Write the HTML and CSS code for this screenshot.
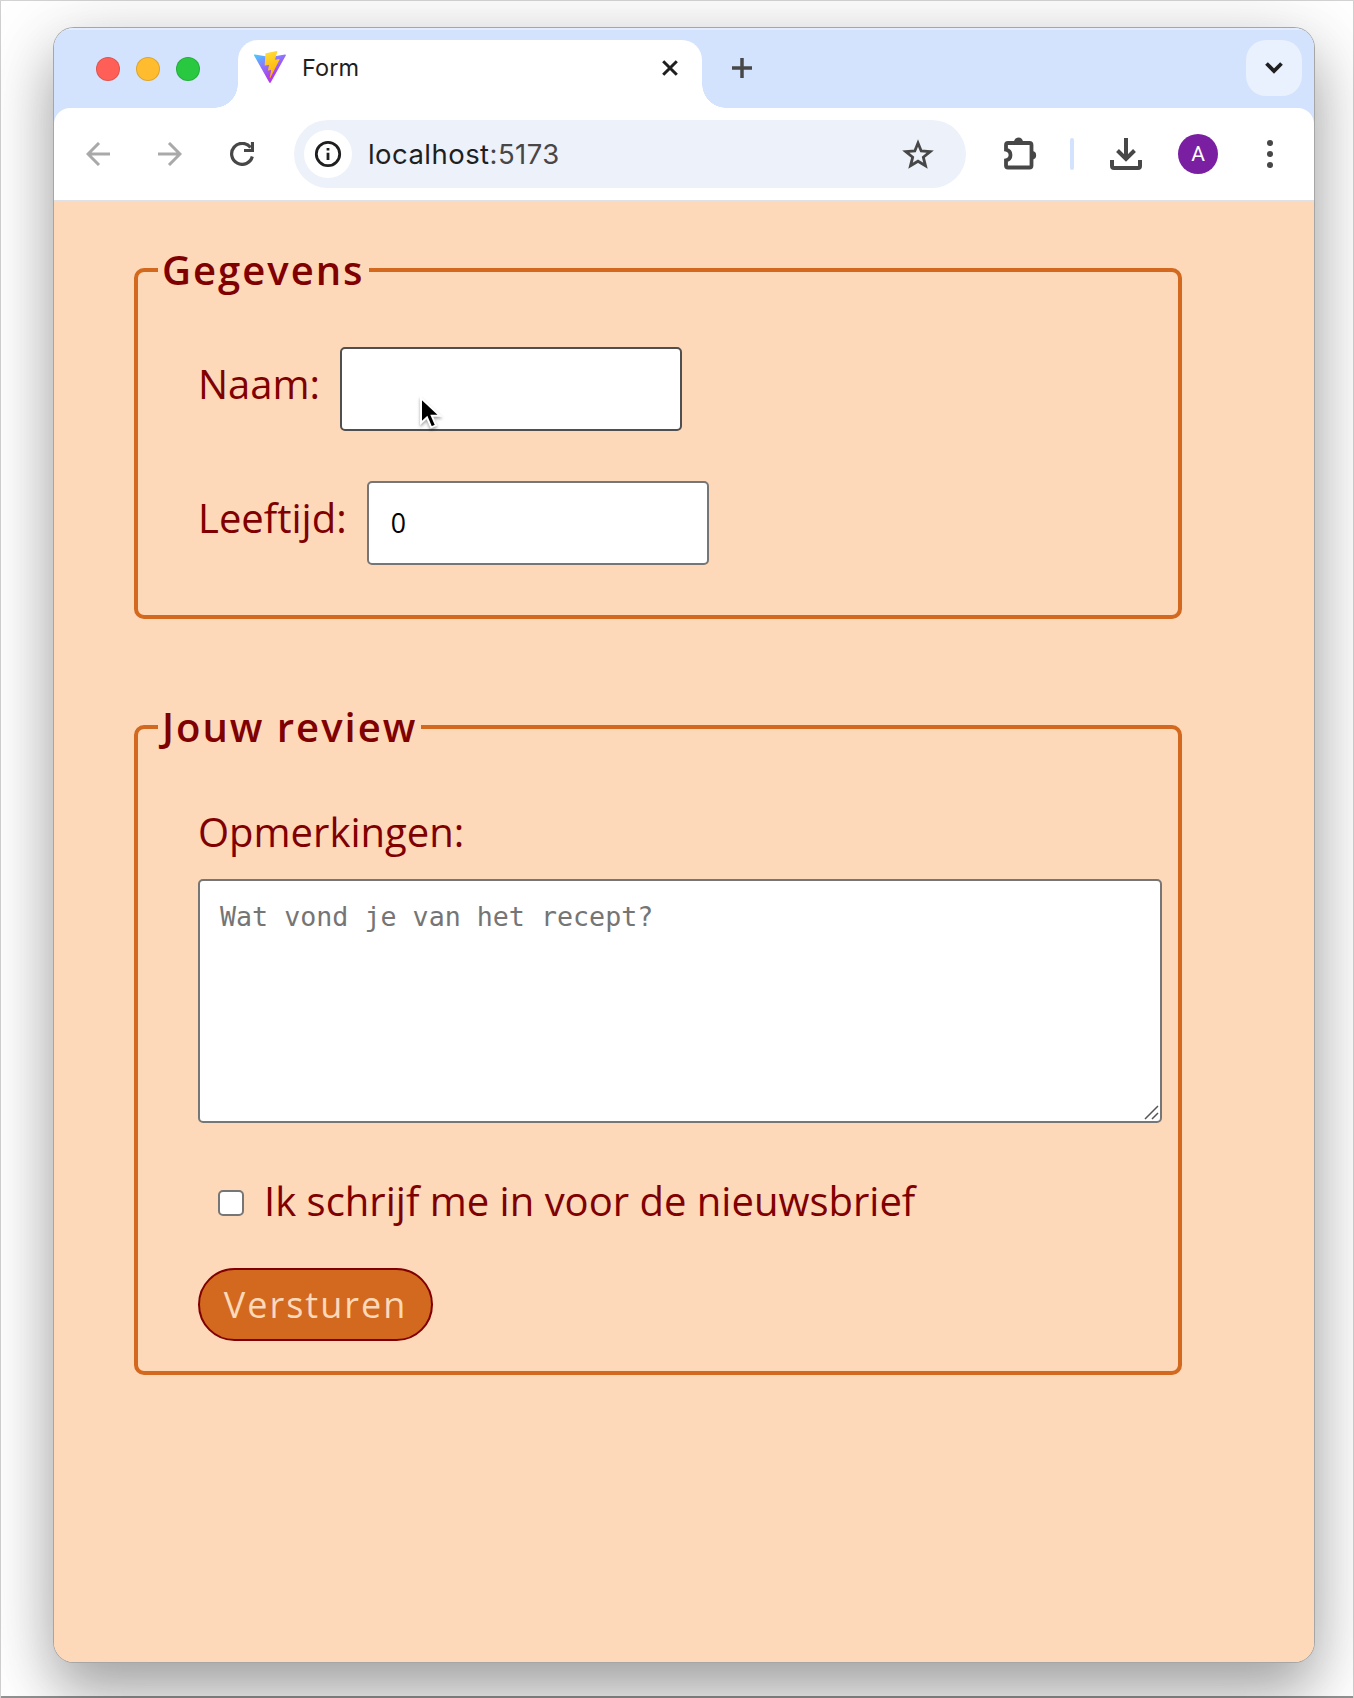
FILE: index.html
```html
<!DOCTYPE html>
<html lang="nl">
<head>
<meta charset="utf-8">
<title>Form</title>
<link rel="stylesheet" href="styles.css">
</head>
<body>
<div class="window">
  <header class="tabstrip">
    <div class="lights"><span class="light red"></span><span class="light yellow"></span><span class="light green"></span></div>
    <div class="tab">
      <svg class="favicon" width="32" height="33" viewBox="0 0 32 33">
        <defs>
          <linearGradient id="va" x1="0" y1="0" x2=".6" y2="1"><stop offset="0" stop-color="#41d1ff"/><stop offset=".4" stop-color="#8a7bff"/><stop offset=".8" stop-color="#b03be8"/></linearGradient>
          <linearGradient id="vb" x1=".4" y1="0" x2=".6" y2="1"><stop offset="0" stop-color="#ffdd35"/><stop offset="1" stop-color="#ffa800"/></linearGradient>
        </defs>
        <path fill="url(#va)" d="M31.8 4.6 16.7 31.5a.8.8 0 0 1-1.4 0L.1 4.6a.8.8 0 0 1 .9-1.2L16 6.1l15-2.7a.8.8 0 0 1 .8 1.2z"/>
        <path fill="url(#vb)" d="M22.7.1 11.8 2.2a.5.5 0 0 0-.4.4l-.7 11.5a.5.5 0 0 0 .6.5l3-.7a.5.5 0 0 1 .6.6l-.9 4.4a.5.5 0 0 0 .6.6l1.9-.6a.5.5 0 0 1 .6.6l-1.4 6.9c-.1.4.5.7.7.3L25.500 8.800a.5.5 0 0 0-.5-.7l-3.200.6a.5.5 0 0 1-.6-.6l2.100-7.400a.5.5 0 0 0-.6-.6z"/>
      </svg>
      <span class="tab-title">Form</span>
      <svg class="close" width="16" height="16" viewBox="0 0 16 16"><path d="M1.200 1.200 14.800 14.800M14.800 1.200 1.200 14.800"/></svg>
    </div>
    <svg class="plus" width="20" height="20" viewBox="0 0 20 20"><path d="M10 0v20M0 10h20"/></svg>
    <div class="tabsearch"><svg width="18" height="12" viewBox="0 0 18 12"><path d="M1.500 1.500 9 9l7.500-7.500"/></svg></div>
  </header>
  <nav class="toolbar">
    <svg class="dim" width="24" height="24" viewBox="0 0 24 24"><path d="M24 12H2M13 1 2 12l11 11"/></svg>
    <svg class="dim" width="24" height="24" viewBox="0 0 24 24"><path d="M0 12h22M11 1l11 11-11 11"/></svg>
    <svg class="reload" width="24" height="24" viewBox="0 0 24 24"><path d="M20.500 5.500A10.500 10.500 0 1 0 22.300 14.500M22.500 0v8.500H14"/></svg>
    <div class="omnibox">
      <span class="info"><svg width="28" height="28" viewBox="0 0 28 28"><circle cx="14" cy="14" r="11.700"/><path d="M14 12.800v7.200M14 8v2.600"/></svg></span>
      <span class="url">localhost<span class="port">:5173</span></span>
      <svg class="star" width="32" height="30" viewBox="0 0 32 30"><path d="M16 4l3.200 8 9 .7-6.900 5.500 2.200 8.600-7.500-4.600-7.500 4.600 2.200-8.600-6.900-5.500 9-.7z"/></svg>
    </div>
    <svg class="puzzle" width="34" height="34" viewBox="0 0 34 34"><path class="line" d="M4 6h21.500a2 2 0 0 1 2 2v20.500a2 2 0 0 1-2 2H4a2 2 0 0 1-2-2v-5.200c6-1.300 6-9.300 0-10.600V8a2 2 0 0 1 2-2z"/><path class="solid" d="M10 5a4.300 4.300 0 0 1 9 0zM28.500 14a4.300 4.300 0 0 1 0 8.500z"/></svg>
    <span class="divider"></span>
    <svg class="download" width="32" height="32" viewBox="0 0 32 32"><path d="M16 0v21M7.500 12.500 16 21l8.500-8.500M2 22v6a2 2 0 0 0 2 2h24a2 2 0 0 0 2-2v-6"/></svg>
    <span class="avatar">A</span>
    <svg class="dots" width="6" height="28" viewBox="0 0 6 28"><circle cx="3" cy="3" r="3"/><circle cx="3" cy="14" r="3"/><circle cx="3" cy="25" r="3"/></svg>
  </nav>
  <main class="page">
    <form>
      <fieldset class="group details">
        <legend>Gegevens</legend>
        <div class="row">
          <label for="naam">Naam:</label>
          <span class="field"><input class="text hovered" id="naam" type="text">
            <svg class="cursor" width="28" height="38" viewBox="0 0 28 38"><path d="M3 3v25l6-5.500 4.200 9.800 4.800-2-4.200-9.500h8.200z"/></svg>
          </span>
        </div>
        <div class="row">
          <label for="leeftijd">Leeftijd:</label>
          <input class="text" id="leeftijd" type="text" value="0">
        </div>
      </fieldset>
      <fieldset class="group review">
        <legend>Jouw review</legend>
        <label class="block" for="opm">Opmerkingen:</label>
        <div class="area">
          <textarea id="opm" placeholder="Wat vond je van het recept?"></textarea>
          <svg class="grip" width="16" height="15" viewBox="0 0 16 15"><path d="M1 14 14 1M8 14l6-6"/></svg>
        </div>
        <label class="check"><input type="checkbox">Ik schrijf me in voor de nieuwsbrief</label>
        <button type="button">Versturen</button>
      </fieldset>
    </form>
  </main>
</div>
</body>
</html>
```
FILE: styles.css
```css
* { box-sizing: border-box; }
html { background: #fff; }
body {
  margin: 0;
  height: 1698px;
  padding: 28px 40px 36px 54px;
  overflow: hidden;
  box-shadow: inset 0 1px #d3d3d3, inset 1px 0 #d0d0d0, inset -1px 0 #d0d0d0, inset 0 -2px #929292;
}
svg { display: block; flex: none; fill: none; }
.window {
  height: 1634px;
  border-radius: 20px;
  overflow: hidden;
  background: linear-gradient(#d3e2fd 140px, #fdd8b9 140px);
  box-shadow: 0 0 0 1px #a6a6a6, 0 32px 56px rgba(0,0,0,.28), 0 10px 80px rgba(0,0,0,.16);
}
.tabstrip {
  display: flex;
  height: 80px;
  padding: 12px 12px 0 42px;
  background: #d3e2fd;
  box-shadow: inset 0 2px #e4edff;
  font-family: Inter, sans-serif;
}
.lights { display: flex; gap: 16px; padding-top: 17px; width: 142px; }
.light { width: 24px; height: 24px; border-radius: 50%; border: 1px solid rgba(0,0,0,.12); }
.red { background: #ff5f57; }
.yellow { background: #febc2e; }
.green { background: #28c840; }
.tab {
  position: relative;
  display: flex;
  width: 464px;
  height: 68px;
  padding: 11px 24px 0 16px;
  border-radius: 20px 20px 0 0;
  background: #fff;
}
.tab::before, .tab::after {
  content: "";
  position: absolute;
  bottom: 0;
  width: 24px;
  height: 24px;
}
.tab::before { right: 100%; background: radial-gradient(circle at 0 0, transparent 23.500px, #fff 24px); }
.tab::after { left: 100%; background: radial-gradient(circle at 100% 0, transparent 23.500px, #fff 24px); }
.tab-title { margin-left: 16px; font-size: 23.500px; line-height: 34px; color: #1f1f1f; letter-spacing: .1px; }
.close { margin: 9px 0 0 auto; stroke: #1f1f1f; stroke-width: 3; }
.plus { margin: 18px 0 0 30px; stroke: #474747; stroke-width: 3.500; }
.tabsearch {
  display: flex;
  align-items: center;
  justify-content: center;
  margin-left: auto;
  width: 56px;
  height: 56px;
  border-radius: 20px;
  background: #e9f0fe;
}
.tabsearch svg { stroke: #1f1f1f; stroke-width: 3.800; }
.toolbar {
  display: flex;
  align-items: center;
  height: 94px;
  padding-left: 32px;
  border-bottom: 2px solid #dfe1e5;
  border-radius: 16px 16px 0 0;
  background: #fff;
  font-family: Inter, sans-serif;
}
.dim { margin-right: 48px; stroke: #a9a9a9; stroke-width: 3; }
.reload { margin-right: 40px; stroke: #474747; stroke-width: 3.200; }
.omnibox {
  display: flex;
  align-items: center;
  width: 672px;
  height: 68px;
  padding: 0 32px 0 10px;
  border-radius: 34px;
  background: #edf1fa;
}
.info {
  display: flex;
  align-items: center;
  justify-content: center;
  width: 48px;
  height: 48px;
  border-radius: 50%;
  background: #fff;
}
.info svg { stroke: #1f1f1f; stroke-width: 2.800; }
.url { margin-left: 16px; font-size: 27.500px; line-height: 40px; letter-spacing: .45px; color: #1f1f1f; }
.port { color: #474747; }
.star { margin-left: auto; stroke: #474747; stroke-width: 2.800; }
.puzzle { margin-left: 38px; }
.puzzle .line { stroke: #474747; stroke-width: 3.800; }
.solid { fill: #474747; }
.divider { width: 4px; height: 32px; margin: 0 36px 0 32px; border-radius: 2px; background: #d3e2fd; }
.download { stroke: #474747; stroke-width: 4; }
.avatar {
  width: 40px;
  height: 40px;
  margin-left: 36px;
  border-radius: 50%;
  background: #7b1fa2;
  color: #fff;
  font: 21px/41px Roboto, sans-serif;
  text-align: center;
}
.dots { margin-left: 49px; fill: #474747; }
.page {
  height: 1460px;
  padding: 41px 132px 0 80px;
  background: #fdd8b9;
  color: maroon;
  font: 40px/54px "Open Sans", sans-serif;
}
.group { margin: 0; border: 4px solid #d2691e; border-radius: 10px; }
.details { padding: 50px 16px 50px 60px; }
.review { margin-top: 81px; padding: 51px 16px 30px 60px; }
legend { margin-left: -40px; padding: 0 4px; font-weight: 600; letter-spacing: 2px; }
.row { display: flex; gap: 20px; height: 84px; }
.row + .row { margin-top: 50px; }
.row label { padding-top: 10px; }
.field { position: relative; height: 84px; }
.text {
  display: block;
  width: 342px;
  height: 84px;
  padding: 0 22px 2px;
  border: 2px solid #767676;
  border-radius: 5px;
  background: #fff;
  color: #000;
  font: 26.670px "Open Sans", sans-serif;
}
.hovered { border-color: #4f4f4f; }
.cursor { position: absolute; left: 78px; top: 48px; fill: #000; stroke: #fff; stroke-width: 2; filter: drop-shadow(0 2px 1.500px rgba(0,0,0,.35)); }
.block { display: block; }
.area { position: relative; height: 244px; margin-top: 20px; }
textarea {
  display: block;
  width: 100%;
  height: 244px;
  padding: 20px;
  border: 2px solid #767676;
  border-radius: 5px;
  background: #fff;
  resize: none;
  font: 26.670px/31px "DejaVu Sans Mono", monospace;
}
textarea::placeholder { color: #757575; }
.grip { position: absolute; right: 2px; bottom: 3px; stroke: #555; stroke-width: 1.500; }
.check { display: flex; align-items: center; margin-top: 51px; padding-left: 20px; }
.check input {
  appearance: none;
  width: 26px;
  height: 26px;
  margin: 4px 20px 0 0;
  border: 2px solid #767676;
  border-radius: 5px;
  background: #fff;
}
button {
  display: block;
  width: 235px;
  height: 73px;
  margin-top: 40px;
  padding: 0;
  border: 2px solid maroon;
  border-radius: 37px;
  background: #d2691e;
  color: #fdd8b9;
  font: 36px/69px "Open Sans", sans-serif;
  letter-spacing: 2px;
}
```
